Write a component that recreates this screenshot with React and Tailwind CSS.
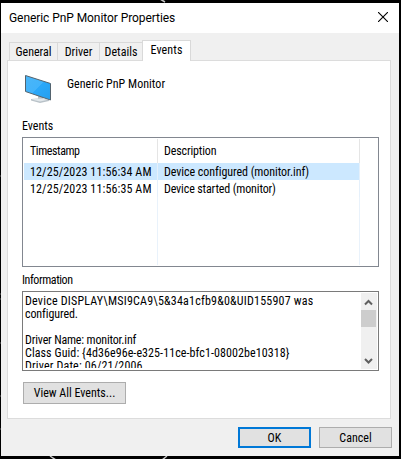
import clsx from 'clsx';

const tabs = [
  { label: 'General', width: 'w-12' },
  { label: 'Driver', width: 'w-[42px]' },
  { label: 'Details', width: 'w-[43px]' },
];

const events = [
  { time: '12/25/2023 11:56:34 AM', description: 'Device configured (monitor.inf)', tracking: 'tracking-[-0.06px]', selected: true },
  { time: '12/25/2023 11:56:35 AM', description: 'Device started (monitor)', tracking: 'tracking-[-0.14px]' },
];

const info = [
  { text: 'Device DISPLAY\\MSI9CA9\\5&34a1cfb9&0&UID155907 was', tracking: 'tracking-[0.21px]' },
  { text: 'configured.', tracking: 'tracking-[-0.1px]' },
  { text: '', tracking: '' },
  { text: 'Driver Name: monitor.inf', tracking: 'tracking-[-0.17px]' },
  { text: 'Class Guid: {4d36e96e-e325-11ce-bfc1-08002be10318}', tracking: 'tracking-[0.08px]' },
  { text: 'Driver Date: 06/21/2006', tracking: 'tracking-[0.16px]' },
];

function Backdrop() {
  return (
    <svg className="absolute inset-0" width="401" height="459" fill="none" stroke="#c4c4c4">
      <path d="M160 -1l5 3" strokeWidth="1.5" />
      <path d="M50 456l6 4M167 456l-5 4" strokeWidth="1.5" />
      <path d="M0 176h1M0 294h1M0 299h1M0 343h1M0 396h1M0 429h1" stroke="#666" />
    </svg>
  );
}

function MonitorIcon() {
  return (
    <svg width="28" height="30" viewBox="0 0 28 30">
      <defs>
        <linearGradient id="screen" x1="0" y1="0" x2="1" y2="1">
          <stop offset="0" stopColor="#4ab6f8" />
          <stop offset="0.5" stopColor="#42b3fb" />
          <stop offset="0.5" stopColor="#2ba8fa" />
          <stop offset="1" stopColor="#259fee" />
        </linearGradient>
      </defs>
      <path d="M14 22v2.500l-7 .5v1.500l9 2.500 9-2v-1l-6-1.500v-2z" fill="#b9c2c8" />
      <path d="M7.500 25.500l8.500 2 7-1.500-4-1.500-6 .3z" fill="#e1e7eb" />
      <path d="M1.500 1.500l25 8v16.500l-25-8.500z" fill="url(#screen)" stroke="#53636e" />
    </svg>
  );
}

function Button({ className, children }) {
  return (
    <button className={clsx('flex items-center justify-center bg-[#e1e1e1] leading-[14px]', className)}>
      {children}
    </button>
  );
}

function ScrollBar() {
  return (
    <div className="flex h-[76px] w-4 shrink-0 flex-col bg-[#f0f0f0]">
      <svg width="16" height="17" viewBox="0 0 16 17" fill="none" stroke="#606060" strokeWidth="2">
        <path d="M4 11.500l3.500-3.500L11 11.500" />
      </svg>
      <div className="h-[17px] w-[15px] bg-[#cdcdcd]" />
      <svg className="mt-auto" width="16" height="17" viewBox="0 0 16 17" fill="none" stroke="#606060" strokeWidth="2">
        <path d="M4 7l3.500 3.500L11 7" />
      </svg>
    </div>
  );
}

export default function App() {
  return (
    <div className="relative h-[459px] w-[401px] overflow-hidden bg-black pt-[3px] pl-px font-['Roboto','Liberation_Sans',sans-serif] text-[12px] leading-[14px] whitespace-pre text-black [font-stretch:87.5%]">
      <Backdrop />
      <div className="relative flex h-[453px] w-[398px] flex-col bg-[#f0f0f0]">
        {/* Title bar */}
        <div className="flex h-[30px] shrink-0 items-start justify-between bg-white pt-2 pr-[11px] pl-2">
          <span className="tracking-[-0.07px] [font-stretch:100%]">Generic PnP Monitor Properties</span>
          <svg className="mt-px" width="10" height="10" viewBox="0 0 10 10" stroke="#000" strokeWidth="1.100">
            <path d="M0 0l10 10M10 0L0 10" />
          </svg>
        </div>

        {/* Tabs */}
        <div className="flex h-[27px] shrink-0 items-end pl-2">
          {tabs.map((tab) => (
            <div
              key={tab.label}
              className={clsx('flex h-[18px] justify-center border-t border-l border-[#d9d9d9] pt-[2px]', tab.width)}
            >
              {tab.label}
            </div>
          ))}
          <div className="relative z-10 -mb-px flex h-[21px] w-[49px] justify-center border border-b-0 border-[#d9d9d9] bg-white pt-[2px] tracking-[0.1px]">
            Events
          </div>
        </div>

        {/* Tab page */}
        <div className="ml-1.5 flex h-[359px] w-[384px] shrink-0 flex-col border border-[#dcdcdc] bg-white pl-[14px]">
          <div className="flex h-[57px] shrink-0 items-start pt-[13px] pl-[2px]">
            <MonitorIcon />
            <span className="mt-[3px] ml-[15px] tracking-[0.03px]">Generic PnP Monitor</span>
          </div>

          <span className="mt-px">Events</span>
          <div className="mt-1 flex h-[130px] w-[357px] shrink-0 flex-col border border-[#828790] p-px">
            <div className="flex h-6 shrink-0">
              <div className="w-[134px] border-r border-[#e5e5e5] pt-[5px] pl-1.5 tracking-[-0.42px]">Timestamp</div>
              <div className="w-[202px] border-r border-[#e5e5e5] pt-[5px] pl-1.5 tracking-[-0.15px]">Description</div>
            </div>
            {events.map((event) => (
              <div key={event.time} className={clsx('flex h-[17px] w-[336px] shrink-0', event.selected && 'bg-[#cce8ff]')}>
                <div className="w-[134px] border-r border-[#e5f0fb] pt-[2px] pl-1.5 tracking-[0.12px]">{event.time}</div>
                <div className={clsx('w-[202px] border-r border-[#e5f0fb] pt-[2px] pl-1.5', event.tracking)}>{event.description}</div>
              </div>
            ))}
            <div className="flex grow">
              <div className="w-[134px] border-r border-[#e9f2fb]" />
              <div className="w-[202px] border-r border-[#e9f2fb]" />
            </div>
          </div>

          <span className="mt-1.5 tracking-[-0.42px]">Information</span>
          <div className="mt-1 flex h-20 w-[357px] shrink-0 justify-between overflow-hidden border border-[#7a7a7a] p-px">
            <div className="h-[75px] overflow-hidden pt-[2px] pl-px leading-[13px]">
              {info.map((line, i) => (
                <div key={i} className={clsx('h-[13px]', line.tracking)}>{line.text}</div>
              ))}
            </div>
            <ScrollBar />
          </div>

          <Button className="mt-[11px] ml-px h-[22px] w-[103px] border border-[#adadad]">View All Events...</Button>
        </div>

        {/* Dialog buttons */}
        <div className="mt-2 mr-[7px] flex justify-end gap-2">
          <Button className="h-[21px] w-[73px] border-2 border-[#0078d7]">OK</Button>
          <Button className="h-[21px] w-[73px] border border-[#adadad]">Cancel</Button>
        </div>
      </div>
    </div>
  );
}
